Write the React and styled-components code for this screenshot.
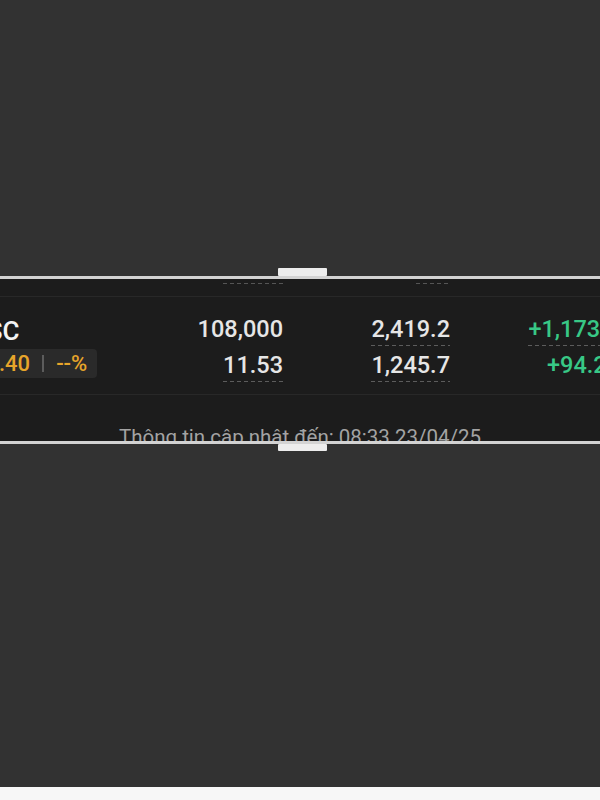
import React from 'react';
import styled, { createGlobalStyle } from 'styled-components';

const Global = createGlobalStyle`
  html, body { margin: 0; padding: 0; background: #f7f7f7; }
  body { font-family: Roboto, "Noto Sans", sans-serif; }
`;

const Screen = styled.div`
  height: 787px;
  box-sizing: border-box;
  padding-top: 276px;
  background: #323232;
  overflow: hidden;
`;

const Frame = styled.div`
  position: relative;
  height: 168px;
  box-sizing: border-box;
  border-top: 3px solid #d3d3d3;
  border-bottom: 3px solid #d3d3d3;
  background: #1c1c1c;
`;

const Handle = styled.div`
  position: absolute;
  left: 278px;
  width: 49px;
  height: ${p => (p.$bottom ? 7 : 8)}px;
  background: #ededed;
  border-radius: 1px;
  ${p => (p.$bottom ? 'bottom: -10px;' : 'top: -11px;')}
  z-index: 2;
`;

const Inner = styled.div`
  height: 100%;
  overflow: hidden;
  display: flex;
  flex-direction: column;
  & > * { flex-shrink: 0; }
`;

const Grid = styled.div`
  display: grid;
  grid-template-columns: 220px 93px 167px 170px;
  margin-left: -30px;
  width: 650px;
`;

const HeaderStub = styled(Grid)`
  height: 18px;
  padding-top: 4px;
  box-sizing: border-box;
  border-bottom: 1px solid #282828;
`;

const Dash = styled.div`
  justify-self: end;
  width: ${p => p.$w}px;
  height: 1px;
  background: repeating-linear-gradient(to right, #555 0 4px, transparent 4px 7px);
`;

const Rows = styled(Grid)`
  height: 98px;
  box-sizing: border-box;
  padding-top: 19px;
  grid-auto-rows: 36px;
  align-items: start;
  border-bottom: 1px solid #282828;
`;

const Cell = styled.div`
  justify-self: end;
  font-size: 23.5px;
  line-height: 27px;
  color: ${p => (p.$up ? '#38c886' : '#e6e6e6')};
  font-weight: 500;
  padding-bottom: 3px;
  background: ${p =>
    p.$dotted
      ? 'repeating-linear-gradient(to right, #5c5c5c 0 4px, transparent 4px 7px) left bottom / 100% 1px no-repeat'
      : 'none'};
`;

const Ticker = styled.div`
  font-size: 26px;
  line-height: 28px;
  font-weight: 500;
  color: #f4f4f4;
  margin-left: 0;
  margin-top: 1px;
`;

const Badge = styled.div`
  display: inline-flex;
  align-items: center;
  gap: 12px;
  margin-left: -4px;
  margin-top: -3px;
  padding: 0 10px 0 8px;
  height: 29px;
  box-sizing: border-box;
  background: #2a2a2a;
  border-radius: 4px;
  font-size: 22px;
  font-weight: 500;
  color: #e7a52a;
`;

const Sep = styled.span`
  width: 2px;
  height: 17px;
  background: #5c5c5c;
`;

const Footer = styled.div`
  padding-top: 31px;
  text-align: center;
  font-size: 20.5px;
  line-height: 22px;
  color: #a3a3a3;
  white-space: nowrap;
`;

export default function App() {
  return (
    <>
      <Global />
      <Screen>
        <Frame>
          <Handle />
          <Inner>
            <HeaderStub>
              <div />
              <Dash $w={60} />
              <Dash $w={34} />
              <div />
            </HeaderStub>
            <Rows>
              <Ticker>VSC</Ticker>
              <Cell>108,000</Cell>
              <Cell $dotted>2,419.2</Cell>
              <Cell $up $dotted>+1,173.5</Cell>
              <div>
                <Badge>
                  <span>32.40</span>
                  <Sep />
                  <span>--%</span>
                </Badge>
              </div>
              <Cell $dotted>11.53</Cell>
              <Cell $dotted>1,245.7</Cell>
              <Cell $up>+94.25</Cell>
            </Rows>
            <Footer>Thông tin cập nhật đến: 08:33 23/04/25</Footer>
          </Inner>
          <Handle $bottom />
        </Frame>
      </Screen>
    </>
  );
}
